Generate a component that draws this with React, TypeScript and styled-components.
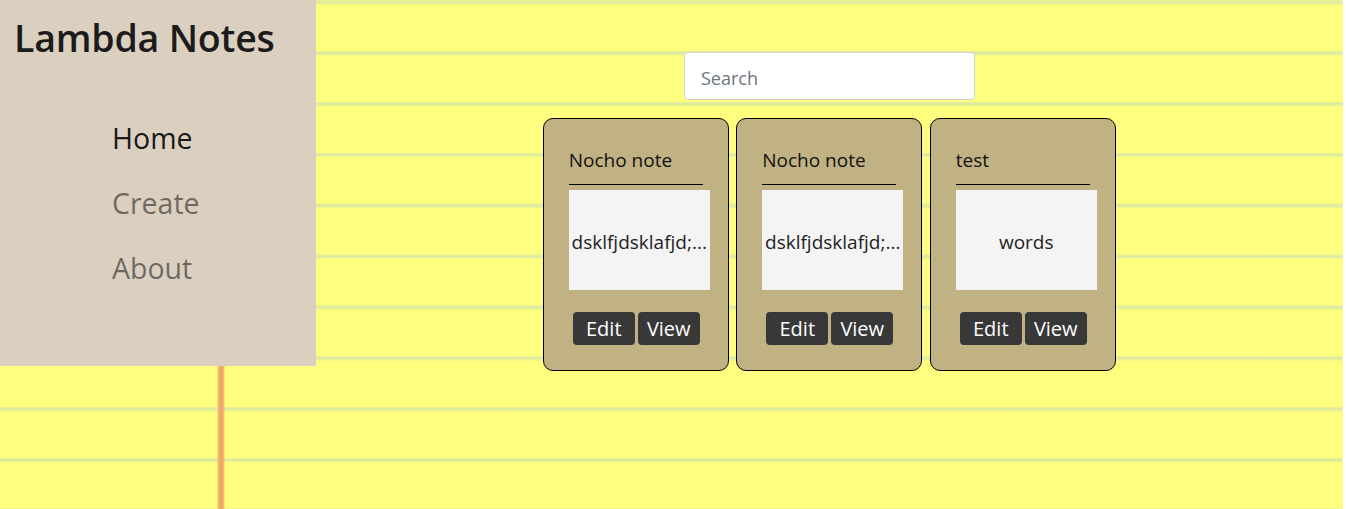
import React from "react";
import styled, { createGlobalStyle } from "styled-components";

const GlobalStyle = createGlobalStyle`
  html, body {
    margin: 0;
    padding: 0;
    background: #ffffff;
  }
  body {
    font-family: "Open Sans", "Noto Sans", "Liberation Sans", sans-serif;
    color: #212529;
  }
  * { box-sizing: border-box; }
`;

const Pad = styled.div`
  width: 1343px;
  height: 509px;
  display: flex;
  align-items: flex-start;
  overflow: hidden;
  background-color: #fefe7f;
  background-image:
    linear-gradient(90deg, transparent 217px, rgba(246, 180, 110, 0.8) 218px, #f3a466 220px, #f3a466 222px, rgba(246, 180, 110, 0.8) 224px, transparent 225px),
    repeating-linear-gradient(
      180deg,
      rgba(165, 200, 215, 0.12) 0px,
      rgba(165, 200, 215, 0.42) 2px,
      rgba(165, 200, 215, 0.12) 4.5px,
      transparent 5px,
      transparent 50.85px
    );
`;

const Sidebar = styled.aside`
  width: 316px;
  height: 366px;
  flex: none;
  background: #dbcfc0;
  padding: 14px 0 0 14px;
`;

const Title = styled.h1`
  margin: 0;
  font-size: 37.5px;
  font-weight: 600;
  line-height: 48px;
  color: #1b1b1b;
  letter-spacing: -0.2px;
`;

const Nav = styled.nav`
  display: flex;
  flex-direction: column;
  gap: 17px;
  margin-top: 52px;
  padding-left: 98px;
`;

const NavLink = styled.a<{ $active?: boolean }>`
  font-size: 28.5px;
  line-height: 48px;
  text-decoration: none;
  color: ${(p) => (p.$active ? "rgba(0,0,0,0.9)" : "rgba(0,0,0,0.5)")};
  cursor: pointer;
`;

const Main = styled.main`
  flex: 1;
  display: flex;
  flex-direction: column;
  align-items: center;
  padding-top: 52px;
`;

const Search = styled.input`
  width: 291px;
  height: 48px;
  border: 1px solid #ced4da;
  border-radius: 4px;
  background: #ffffff;
  padding: 11px 16px 7px;
  font-family: inherit;
  font-size: 18px;
  color: #495057;
  outline: none;
  &::placeholder {
    color: #6c757d;
  }
`;

const CardRow = styled.div`
  display: flex;
  gap: 7.5px;
  margin-top: 18px;
  margin-left: -0.5px;
`;

const Card = styled.div`
  width: 186px;
  height: 253px;
  border: 1px solid #000;
  border-radius: 10px;
  background: #c1b283;
  padding: 29px 18px 0 25px;
  display: flex;
  flex-direction: column;
`;

const CardTitle = styled.div`
  font-size: 19px;
  line-height: 24px;
  color: #111;
  padding-bottom: 12px;
  margin-right: 7px;
  border-bottom: 1px solid #000;
`;

const CardBody = styled.div`
  margin-top: 5px;
  height: 100px;
  background: #f4f4f4;
  display: flex;
  align-items: center;
  justify-content: center;
  padding-top: 4px;
  font-size: 19px;
  color: #222;
  overflow: hidden;
  white-space: nowrap;
`;

const Actions = styled.div`
  display: flex;
  justify-content: center;
  gap: 3px;
  margin-top: 22px;
  margin-left: -6px;
`;

const Button = styled.button`
  width: 62px;
  height: 33px;
  border: none;
  border-radius: 4px;
  background: #383838;
  color: #fff;
  font-family: inherit;
  font-size: 20px;
  padding: 0 0 1px;
  cursor: pointer;
`;

const notes = [
  { title: "Nocho note", body: "dsklfjdsklafjd;..." },
  { title: "Nocho note", body: "dsklfjdsklafjd;..." },
  { title: "test", body: "words" },
];

export default function App() {
  return (
    <>
      <GlobalStyle />
      <Pad>
        <Sidebar>
          <Title>Lambda Notes</Title>
          <Nav>
            <NavLink $active>Home</NavLink>
            <NavLink>Create</NavLink>
            <NavLink>About</NavLink>
          </Nav>
        </Sidebar>
        <Main>
          <Search placeholder="Search" />
          <CardRow>
            {notes.map((n, i) => (
              <Card key={i}>
                <CardTitle>{n.title}</CardTitle>
                <CardBody>{n.body}</CardBody>
                <Actions>
                  <Button>Edit</Button>
                  <Button>View</Button>
                </Actions>
              </Card>
            ))}
          </CardRow>
        </Main>
      </Pad>
    </>
  );
}
